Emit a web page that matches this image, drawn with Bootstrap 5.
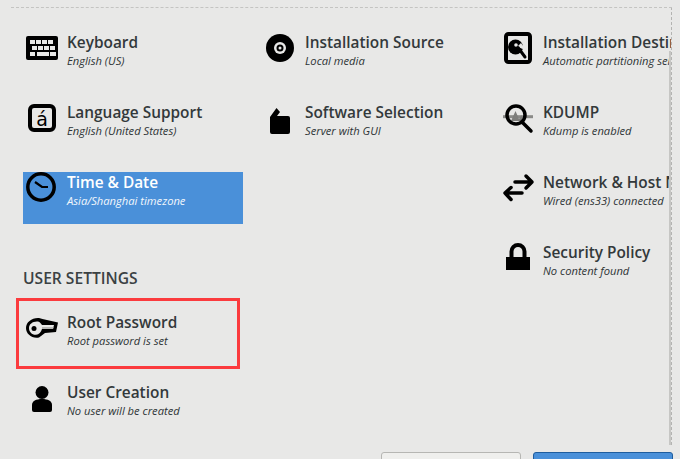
<!DOCTYPE html>
<html lang="en">
<head>
<meta charset="utf-8">
<title>Installation Summary</title>
<link href="https://cdn.jsdelivr.net/npm/bootstrap@5.3.0/dist/css/bootstrap.min.css" rel="stylesheet">
<style>
html, body { height: 459px; overflow: hidden; }
body { background: #e8e8e7; color: #2e3436; font-family: "Open Sans", "Noto Sans", sans-serif; }
.summary-pane { margin-left: 11px; margin-top: 7px; width: 661px; height: 438px; border-top: 1px dashed #c4c4c2; border-right: 1px dashed #b4b4b2; overflow: hidden; position: relative; padding: 24px 0 0 12px; }
.scroll-track { position: absolute; top: 43px; right: 0; width: 2px; bottom: 0; background: #c6c6c4; }
.spoke-col { width: 238px; flex: none; gap: 18px; }
.spoke { width: 220px; height: 52px; flex: none; white-space: nowrap; }
.spoke-icon { width: 44px; height: 52px; flex: none; display: block; }
.spoke-name { font-size: 15.4px; font-weight: 600; line-height: 21px; margin-bottom: 1px; color: #33393b; }
.spoke-state { font-size: 11.2px; font-style: italic; line-height: 14px; }
.spoke-on { background: #4a90d9; color: #fff; }
.spoke-on .spoke-name { color: #fff; }
.spoke-on .spoke-state { color: #f2f7fc; }
.group-title { font-size: 15.6px; font-weight: 600; line-height: 20px; margin: 26px 0 6px; height: 20px; color: #3b4143; }
.spoke-marked { position: relative; }
.red-mark { position: absolute; left: -7px; top: -14px; width: 224px; height: 71px; border: 3px solid #fb3b3e; pointer-events: none; }
.foot-row { gap: 12px; padding: 7px 7px 0 0; }
.foot-btn { width: 140px; height: 36px; flex: none; border-radius: 3px; font-size: 13px; padding: 0; }
.foot-quit { background: #efefed; border: 1px solid #b6b6b3; color: #2e3436; }
.foot-go { background: #4a90d9; border: 1px solid #1f5d9e; color: #fff; }
svg .cut { fill: #e8e8e7; }
</style>
</head>
<body>
<div class="summary-pane d-flex">
  <div class="scroll-track"></div>

  <div class="spoke-col d-flex flex-column">
    <div class="spoke d-flex">
      <svg class="spoke-icon" viewBox="0 0 44 52"><rect x="3" y="4" width="32" height="24" rx="2" fill="#000"/>
        <g class="cut"><rect x="7" y="8" width="5" height="4"/><rect x="13" y="8" width="5" height="4"/><rect x="19" y="8" width="5" height="4"/><rect x="25" y="8" width="5" height="4"/>
        <rect x="9" y="14" width="5" height="4"/><rect x="15" y="14" width="5" height="4"/><rect x="21" y="14" width="5" height="4"/><rect x="27" y="14" width="5" height="4"/>
        <rect x="7" y="20" width="5" height="4"/><rect x="14" y="20" width="12" height="4"/><rect x="27" y="20" width="6" height="4"/></g></svg>
      <div><div class="spoke-name">Keyboard</div><div class="spoke-state">English (US)</div></div>
    </div>
    <div class="spoke d-flex">
      <svg class="spoke-icon" viewBox="0 0 44 52"><rect x="7" y="4" width="24" height="24" rx="4" fill="none" stroke="#000" stroke-width="4"/>
        <text x="19" y="23.500" text-anchor="middle" font-family="DejaVu Sans" font-size="19" fill="#000">á</text></svg>
      <div><div class="spoke-name">Language Support</div><div class="spoke-state">English (United States)</div></div>
    </div>
    <div class="spoke spoke-on d-flex">
      <svg class="spoke-icon" viewBox="0 0 44 52"><circle cx="18" cy="15" r="13.200" fill="none" stroke="#000" stroke-width="3.500"/>
        <path d="M12 10L19 15H25" fill="none" stroke="#000" stroke-width="2.200"/></svg>
      <div><div class="spoke-name">Time &amp; Date</div><div class="spoke-state">Asia/Shanghai timezone</div></div>
    </div>
    <div class="group-title">USER SETTINGS</div>
    <div class="spoke spoke-marked d-flex">
      <svg class="spoke-icon" viewBox="0 0 44 52"><path d="M3 16C3 10 9 5.500 16 6L19.500 7L35 10.500L33 20L22 21L16 25.500C9 27 3 22 3 16Z" fill="#000"/>
        <path d="M6 16C6 12 10 9 15 9.500C17 10 18 12 19 13H31L30 17H19C18 20 16 22.500 13 22.800C9 23 6 20 6 16Z" class="cut"/>
        <path d="M19 15H30.500L30 17H19Z" fill="#b8b8b6"/>
        <circle cx="11" cy="16.500" r="2.500" fill="#000"/></svg>
      <div><div class="spoke-name">Root Password</div><div class="spoke-state">Root password is set</div></div>
      <div class="red-mark"></div>
    </div>
    <div class="spoke d-flex">
      <svg class="spoke-icon" viewBox="0 0 44 52"><circle cx="19" cy="10.500" r="6.500" fill="#000"/><path d="M9 28V23C9 19 13 17 19 17S29 19 29 23V28Q29 30 27 30H11Q9 30 9 28Z" fill="#000"/></svg>
      <div><div class="spoke-name">User Creation</div><div class="spoke-state">No user will be created</div></div>
    </div>
  </div>

  <div class="spoke-col d-flex flex-column">
    <div class="spoke d-flex">
      <svg class="spoke-icon" viewBox="0 0 44 52"><circle cx="19" cy="16" r="14" fill="#000"/><circle class="cut" cx="19" cy="16" r="6"/><circle cx="19" cy="16" r="3.500" fill="#000"/><circle class="cut" cx="19" cy="16" r="1.500"/></svg>
      <div><div class="spoke-name">Installation Source</div><div class="spoke-state">Local media</div></div>
    </div>
    <div class="spoke d-flex">
      <svg class="spoke-icon" viewBox="0 0 44 52"><path d="M11 32Q9 32 9 30V15L15.500 6L19 10L16 14H27Q29 14 29 16V30Q29 32 27 32Z" fill="#000"/></svg>
      <div><div class="spoke-name">Software Selection</div><div class="spoke-state">Server with GUI</div></div>
    </div>
  </div>

  <div class="spoke-col d-flex flex-column">
    <div class="spoke d-flex">
      <svg class="spoke-icon" viewBox="0 0 44 52"><rect x="7" y="2" width="24" height="28" rx="2.500" fill="none" stroke="#000" stroke-width="4"/>
        <circle cx="16.500" cy="15" r="7.500" fill="#000"/><circle class="cut" cx="17" cy="13" r="1.800"/><path d="M18 15L22 11L27 18Z" class="cut"/><path d="M19 15.500L26 25" stroke="#000" stroke-width="3" stroke-linecap="round"/></svg>
      <div><div class="spoke-name">Installation Destination</div><div class="spoke-state">Automatic partitioning selected</div></div>
    </div>
    <div class="spoke d-flex">
      <svg class="spoke-icon" viewBox="0 0 44 52"><path d="M4 14.700H34" stroke="#8a8a88" stroke-width="3"/><path d="M12 19L16.500 9L20 17L22.500 13L24 19Z" fill="#7d7d7b"/>
        <circle cx="17" cy="13" r="9" fill="none" stroke="#000" stroke-width="3.500"/><path d="M23 20L32 29" stroke="#000" stroke-width="3.500" stroke-linecap="round"/></svg>
      <div><div class="spoke-name">KDUMP</div><div class="spoke-state">Kdump is enabled</div></div>
    </div>
    <div class="spoke d-flex">
      <svg class="spoke-icon" viewBox="0 0 44 52"><g fill="none" stroke="#000" stroke-width="3.500" stroke-linecap="round" stroke-linejoin="round"><path d="M16 10H33M27 4L33 10L27 16"/><path d="M6 21H23M12 15.500L6 21L12 27.500"/></g></svg>
      <div><div class="spoke-name">Network &amp; Host Name</div><div class="spoke-state">Wired (ens33) connected</div></div>
    </div>
    <div class="spoke d-flex">
      <svg class="spoke-icon" viewBox="0 0 44 52"><rect x="7" y="15" width="24" height="13" fill="#000"/><path d="M12.500 16V9.500A6.500 6.500 0 0 1 25.500 9.500V16" fill="none" stroke="#000" stroke-width="4"/></svg>
      <div><div class="spoke-name">Security Policy</div><div class="spoke-state">No content found</div></div>
    </div>
  </div>
</div>
<div class="foot-row d-flex justify-content-end">
  <button type="button" class="btn foot-btn foot-quit">Quit</button>
  <button type="button" class="btn foot-btn foot-go">Begin Installation</button>
</div>
<script src="https://cdn.jsdelivr.net/npm/bootstrap@5.3.0/dist/js/bootstrap.bundle.min.js"></script>
</body>
</html>
